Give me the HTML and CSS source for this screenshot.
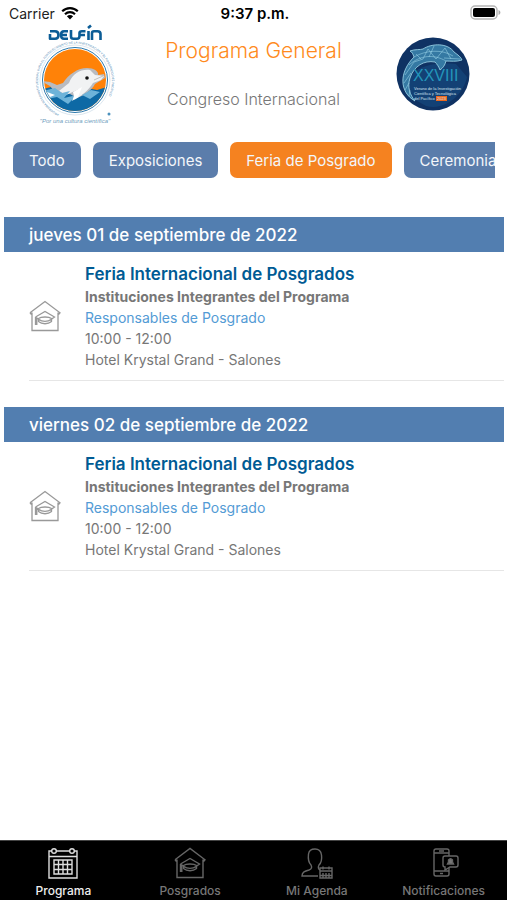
FILE: index.html
```html
<!DOCTYPE html>
<html lang="es">
<head>
    <meta charset="utf-8">
    <meta name="viewport" content="width=device-width, initial-scale=1">
    <title>Programa General</title>
    <link rel="stylesheet" href="styles.css">
</head>
<body>
    <!-- shared icons -->
    <svg class="icon-defs" aria-hidden="true">
        <symbol id="icon-school" viewBox="0 0 32 32">
            <path d="M3 12.500V30.500H29V12.500M1 12.800L16 1.500L31 12.800L29.500 14.500M1 12.800L2.500 14.500" />
            <path d="M6.500 17L16 11.500L25.500 17L22 19.500M6.500 17L10 19.500M6.500 17V25M7.800 18V25" />
            <path d="M9.500 18.500C12 16.500 20 16.500 22.500 18.500V21.500C19 24.500 13 24.500 9.500 21.500ZM10 19.500C13 22 19 22 22 19.500" />
        </symbol>
    </svg>

    <div class="status-bar">
        <div class="carrier">
            <span>Carrier</span>
            <svg class="wifi" viewBox="0 0 18 14" aria-hidden="true">
                <path d="M1.200 5.300C5.500 1 12.500 1 16.800 5.300M4 8.200C6.800 5.500 11.200 5.500 14 8.200" />
                <path class="wifi-dot" d="M5.900 10.300C7.600 8.600 10.400 8.600 12.100 10.300L9 13.500Z" />
            </svg>
        </div>
        <div class="time">9:37 p.m.</div>
        <div class="battery">
            <svg viewBox="0 0 31 16" aria-hidden="true">
                <rect x="1" y="1" width="26" height="13" rx="4" fill="#fff" stroke="#b5b5b5" stroke-width="1.500" />
                <rect x="3" y="3" width="22" height="9" rx="2" fill="#000" />
                <path d="M28.500 5C31 6 31 9 28.500 10Z" fill="#aaa" />
            </svg>
        </div>
    </div>

    <header class="header">
        <svg class="logo-delfin" viewBox="0 0 80 104" role="img" aria-label="Delfín">
            <g fill="none" stroke="#0b5c96" stroke-width="2.600" stroke-linejoin="round">
                <path d="M15 9.200H20Q23.500 9.200 23.500 13Q23.500 16.800 20 16.800H15V12" />
                <path d="M33 9.200H29Q26 9.200 26 13Q26 16.800 29 16.800H33M26 13H32" />
                <path d="M36 8V14.500Q36 16.800 38.500 16.800H42Q44.500 16.800 44.500 14V11Q44.500 9.200 47 9.200H50.500M44.500 13H50" />
                <path d="M53.500 9V18M57 18V11Q57 9.200 59 9.200H62.500Q65.500 9.200 65.500 12V18M53 6L56 3.500" />
            </g>
            <circle cx="40" cy="58" r="35" fill="none" stroke="#dce7ef" stroke-width="1" />
            <circle cx="40" cy="58" r="32.500" fill="#fff" stroke="#2c78ab" stroke-width="1" />
            <clipPath id="sea"><circle cx="40" cy="58" r="31" /></clipPath>
            <g clip-path="url(#sea)">
                <path fill="#ff8208" d="M8 26H72V90H8Z" />
                <path fill="#0d69a5" d="M8 67L16 65L23 68L32 66L42 69L52 66L62 68L72 65V90H8Z" />
                <path fill="#b9bbc0" d="M6 59L15 60L22 63L28 61C34 52 43 46 52 46C60 46 64 50 63 53L69 52L70 56L60 62C57 68 50 73 42 76L35 72L20 70L15 64Z" />
                <path fill="#f1f2f3" d="M34 61C38 51 46 47 55 48L60 53L69 54L66 58L58 61C54 68 46 74 39 78L44 67L31 73L24 69Z" />
                <path fill="#6db3d9" d="M8 69L20 66L27 71L35 69L29 76L42 73L33 82L22 75L12 77ZM47 73L56 68L65 70L55 77Z" />
                <path fill="#fff" d="M38 70L47 65L43 75L37 79L39 74ZM12 70L20 73L15 75Z" />
                <circle cx="52" cy="56" r="1.800" fill="#111" />
                <path d="M59 58L68 54" fill="none" stroke="#aaa" stroke-width=".700" />
            </g>
            <path id="ring" d="M24 92A37 37 0 1 1 56 92" fill="none" />
            <text class="logo-ring"><textPath href="#ring">PROGRAMA INTERINSTITUCIONAL PARA EL FORTALECIMIENTO DE LA INVESTIGACIÓN Y EL POSGRADO DEL PACÍFICO</textPath></text>
            <circle cx="74" cy="92" r="1.500" fill="#4c91bd" />
            <text class="logo-motto" x="40" y="101">"Por una cultura científica"</text>
        </svg>

        <div class="titles">
            <h1>Programa General</h1>
            <p>Congreso Internacional</p>
        </div>

        <svg class="logo-congreso" viewBox="0 0 74 74" role="img" aria-label="XXVIII Verano de la Investigación">
            <circle cx="37" cy="37" r="36.500" fill="#0f3263" />
            <path fill="#174f87" d="M14 60C6 38 22 24 60 27L71 40C67 59 48 74 30 69Z" opacity=".5" />
            <!-- dolphin -->
            <path fill="#3579a3" d="M19 64C3 55 3 35 18 20C17 17 16 15 14 14C19 12 24 13 27 12C36 6 52 6 58 15C62 18 65 20 66 23C60 25 55 24 50 24C49 28 47 31 44 33C43 30 41 27 39 25C28 23 18 29 14 41C11 50 14 58 19 64Z" />
            <g fill="none" stroke="#a4dcee" stroke-width=".800">
                <path d="M19 64C3 55 3 35 18 20C17 17 16 15 14 14C19 12 24 13 27 12C36 6 52 6 58 15C62 18 65 20 66 23C60 25 55 24 50 24C49 28 47 31 44 33C43 30 41 27 39 25C28 23 18 29 14 41C11 50 14 58 19 64Z" />
                <path d="M18 20C30 13 46 12 57 19M13 28C24 18 38 17 50 24M9 38L18 25L27 22L32 12L40 22L49 11L55 22M8 46L15 36M9 53L13 46M13 59L14 53M20 17L25 22M38 9L33 20M48 21L64 22" stroke-width=".500" />
            </g>
            <text class="edition" x="17" y="44">XXVIII</text>
            <text class="edition-text" x="18" y="53">Verano de la Investigación</text>
            <text class="edition-text" x="18" y="58">Científica y Tecnológica</text>
            <text class="edition-text" x="18" y="63">del Pacífico</text>
            <rect x="40" y="59" width="11" height="5" fill="#ed681c" />
            <text class="edition-text" x="41" y="63">2023</text>
        </svg>
    </header>

    <div class="filters">
        <button type="button" class="filter">Todo</button>
        <button type="button" class="filter">Exposiciones</button>
        <button type="button" class="filter selected">Feria de Posgrado</button>
        <button type="button" class="filter">Ceremonias</button>
    </div>

    <main class="schedule">
        <section class="day">
            <h2>jueves 01 de septiembre de 2022</h2>
            <article class="event">
                <svg class="event-icon" aria-hidden="true"><use href="#icon-school" /></svg>
                <div class="event-info">
                    <h3>Feria Internacional de Posgrados</h3>
                    <p class="organizer">Instituciones Integrantes del Programa</p>
                    <p class="speaker">Responsables de Posgrado</p>
                    <p>10:00 - 12:00</p>
                    <p>Hotel Krystal Grand - Salones</p>
                </div>
            </article>
        </section>

        <section class="day">
            <h2>viernes 02 de septiembre de 2022</h2>
            <article class="event">
                <svg class="event-icon" aria-hidden="true"><use href="#icon-school" /></svg>
                <div class="event-info">
                    <h3>Feria Internacional de Posgrados</h3>
                    <p class="organizer">Instituciones Integrantes del Programa</p>
                    <p class="speaker">Responsables de Posgrado</p>
                    <p>10:00 - 12:00</p>
                    <p>Hotel Krystal Grand - Salones</p>
                </div>
            </article>
        </section>
    </main>

    <nav class="tabs">
        <a href="#programa" class="tab active">
            <svg viewBox="0 0 32 32" aria-hidden="true">
                <path d="M5 4H2V31H30V4H27M9 4H23M2 9.500H30" />
                <circle cx="7" cy="4" r="2.300" /><circle cx="25" cy="4" r="2.300" />
                <path d="M7 13H25V27H7ZM11.500 13V27M16 13V27M20.500 13V27M7 17.500H25M7 22.500H25" />
            </svg>
            <span>Programa</span>
        </a>
        <a href="#posgrados" class="tab">
            <svg aria-hidden="true"><use href="#icon-school" /></svg>
            <span>Posgrados</span>
        </a>
        <a href="#agenda" class="tab">
            <svg viewBox="0 0 32 32" aria-hidden="true">
                <path d="M17 29H1C1 25 4 24 8 23C11 22 11 20 10 18C7 15 7 11 7.500 7C8 3 11 2 14 2C18 2 20 4 20.500 8C21 12 20 16 18 18C17 20 17 22 19 23" />
                <path d="M19 21H31V31H19ZM19 24H31M22 19.500V22.500M28 19.500V22.500M22 26V31M25 26V31M28 26V31M19 28.500H31" />
            </svg>
            <span>Mi Agenda</span>
        </a>
        <a href="#notificaciones" class="tab">
            <svg viewBox="0 0 32 32" aria-hidden="true">
                <path d="M21 9V4Q21 2 19 2H8Q6 2 6 4V27Q6 29 8 29H19Q21 29 21 27V21M6 6H21M6 24H21M11 4H16M12 26.500H15" />
                <path d="M17 9H28Q30 9 30 11V18Q30 20 28 20H22L17 23V20Q15 20 15 18V11Q15 9 17 9Z" />
                <path class="bell" d="M19.500 17L20.500 15V13Q22.500 10.500 24.500 13V15L25.500 17Z" />
            </svg>
            <span>Notificaciones</span>
        </a>
    </nav>
</body>
</html>
```

FILE: styles.css
```css
* {
    box-sizing: border-box;
}

body {
    display: flex;
    flex-direction: column;
    min-height: 100vh;
    margin: 0;
    background: #fff;
    color: #777;
    font-family: Inter, "Liberation Sans", sans-serif;
}

h1, h2, h3, p {
    margin: 0;
}

.icon-defs {
    display: none;
}

/* status bar */
.status-bar {
    display: grid;
    grid-template-columns: 1fr auto 1fr;
    align-items: center;
    height: 26px;
    padding: 0 6px 0 9px;
    color: #222;
    font-size: 14px;
}

.carrier {
    display: flex;
    align-items: center;
    gap: 6px;
}

.wifi {
    width: 18px;
    height: 14px;
    fill: none;
    stroke: #000;
    stroke-width: 2.2;
}

.wifi .wifi-dot {
    fill: #000;
    stroke: none;
}

.time {
    color: #000;
    font-size: 15px;
    font-weight: 600;
}

.battery {
    display: flex;
    justify-content: flex-end;
}

.battery svg {
    width: 31px;
    height: 16px;
}

/* header */
.header {
    display: flex;
    justify-content: space-between;
    align-items: flex-start;
    height: 102px;
    padding: 0 37px 0 35px;
}

.logo-delfin {
    width: 80px;
    height: 104px;
    margin-top: -4px;
}

.logo-ring {
    fill: #4a86b2;
    font-family: "Liberation Sans", sans-serif;
    font-size: 3px;
}

.logo-motto {
    fill: #6d9dbd;
    font-family: "Liberation Sans", sans-serif;
    font-size: 6px;
    font-style: italic;
    text-anchor: middle;
}

.titles {
    flex: 1;
    padding: 10px 4px 0 0;
    text-align: center;
}

.titles h1 {
    color: #ff8a20;
    font-size: 21px;
    font-weight: 300;
    line-height: 30px;
}

.titles p {
    margin-top: 22px;
    font-size: 16px;
    font-weight: 300;
    line-height: 23px;
}

.logo-congreso {
    width: 74px;
    height: 74px;
    margin-top: 11px;
}

.edition {
    fill: #2395ba;
    font-family: "Liberation Sans", sans-serif;
    font-size: 16px;
}

.edition-text {
    fill: #d7e4ef;
    font-family: "Liberation Sans", sans-serif;
    font-size: 4px;
}

/* filter buttons */
.filters {
    display: flex;
    gap: 12px;
    margin: 14px 12px 0 13px;
    overflow: hidden;
}

.filter {
    flex: none;
    height: 36px;
    padding: 0 16px;
    border: none;
    border-radius: 7px;
    background: #5b7dab;
    color: #f3f6fa;
    font-family: inherit;
    font-size: 15px;
    cursor: pointer;
}

.filter.selected {
    background: #f58220;
}

/* schedule */
.schedule {
    flex: 1;
    padding: 39px 3px 0 4px;
}

.day {
    margin-bottom: 26px;
}

.day h2 {
    padding: 2px 25px 0;
    background: #527eb0;
    color: #fff;
    font-size: 17px;
    font-weight: 500;
    line-height: 33px;
}

.event {
    display: flex;
    align-items: center;
    gap: 24px;
    margin-left: 25px;
    padding: 10px 0;
    border-bottom: 1px solid #e6e6e6;
}

.event-icon {
    flex: none;
    width: 32px;
    height: 32px;
    fill: none;
    stroke: #999;
    stroke-width: 1.3;
}

.event-info {
    font-size: 14px;
    line-height: 21px;
}

.event-info h3 {
    color: #005b94;
    font-size: 17px;
    font-weight: 600;
    line-height: 24px;
}

.organizer {
    font-weight: 700;
}

.speaker {
    color: #539bd5;
}

/* bottom tabs */
.tabs {
    display: flex;
    height: 60px;
    border-top: 1px solid #444;
    background: #000;
}

.tab {
    flex: 1;
    display: flex;
    flex-direction: column;
    align-items: center;
    gap: 4px;
    padding-top: 6px;
    color: #777;
    font-size: 12px;
    font-weight: 500;
    line-height: 15px;
    text-decoration: none;
}

.tab svg {
    width: 32px;
    height: 32px;
    fill: none;
    stroke: #666;
    stroke-width: 1.4;
}

.tab .bell {
    fill: #777;
}

.tab.active {
    color: #eee;
}

.tab.active svg {
    stroke: #ddd;
}
```
